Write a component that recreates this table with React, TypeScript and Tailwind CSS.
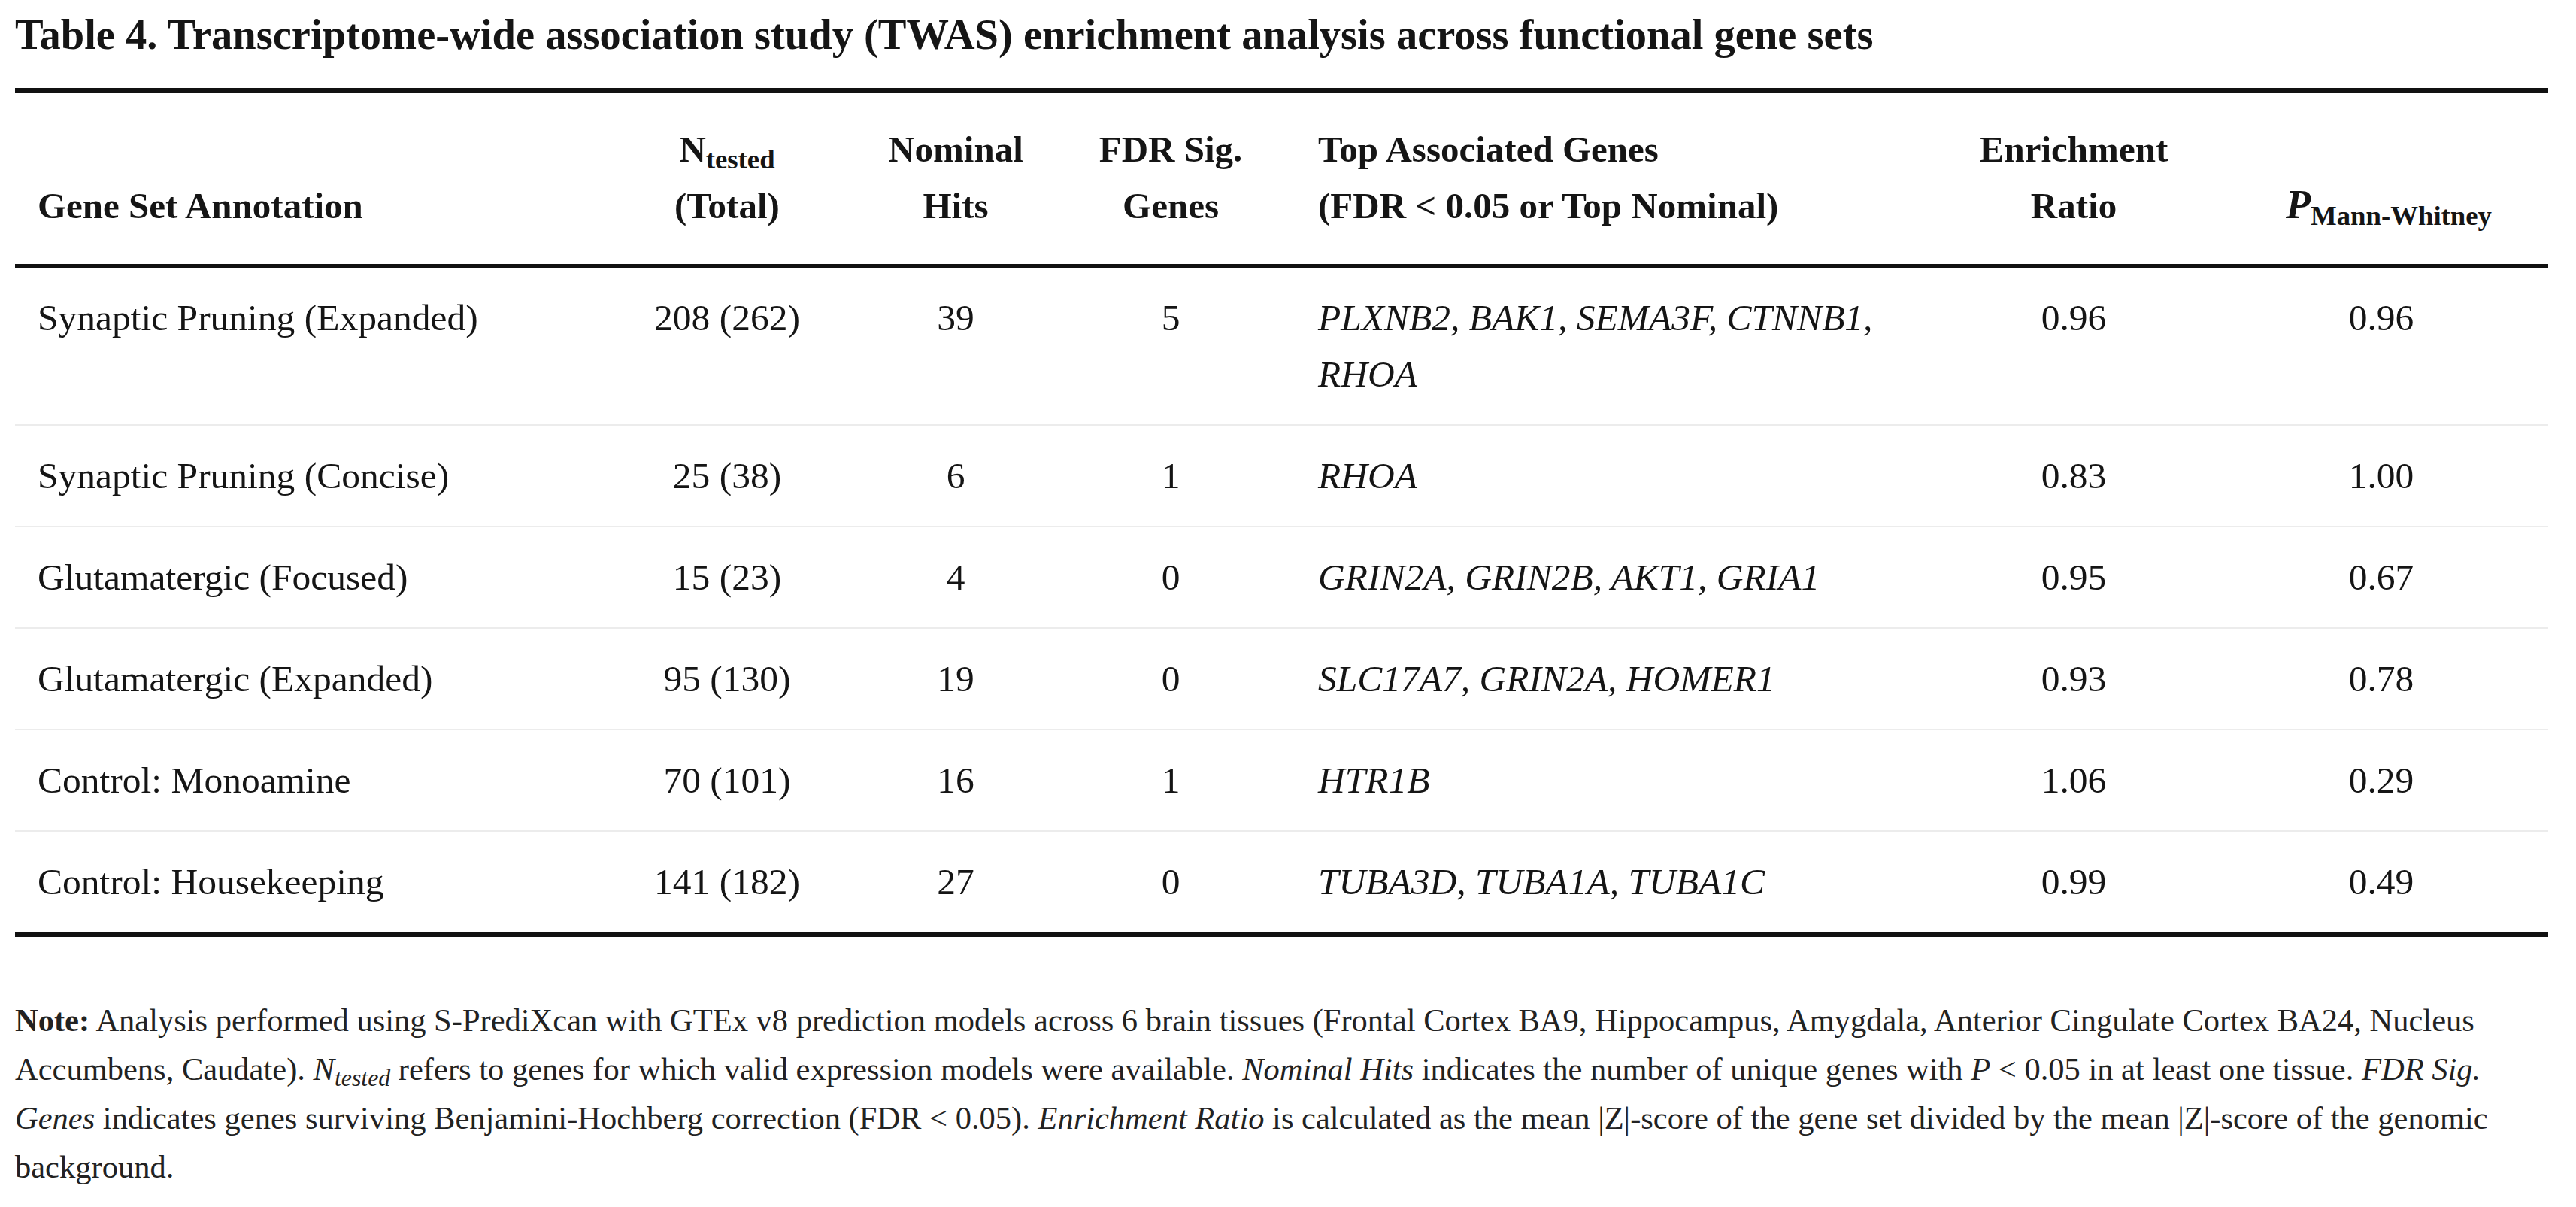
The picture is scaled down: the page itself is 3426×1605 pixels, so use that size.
import React from "react";

type Row = {
  name: string;
  tested: string;
  hits: string;
  fdr: string;
  genes: string;
  ratio: string;
  p: string;
};

const rows: Row[] = [
  { name: "Synaptic Pruning (Expanded)", tested: "208 (262)", hits: "39", fdr: "5", genes: "PLXNB2, BAK1, SEMA3F, CTNNB1, RHOA", ratio: "0.96", p: "0.96" },
  { name: "Synaptic Pruning (Concise)", tested: "25 (38)", hits: "6", fdr: "1", genes: "RHOA", ratio: "0.83", p: "1.00" },
  { name: "Glutamatergic (Focused)", tested: "15 (23)", hits: "4", fdr: "0", genes: "GRIN2A, GRIN2B, AKT1, GRIA1", ratio: "0.95", p: "0.67" },
  { name: "Glutamatergic (Expanded)", tested: "95 (130)", hits: "19", fdr: "0", genes: "SLC17A7, GRIN2A, HOMER1", ratio: "0.93", p: "0.78" },
  { name: "Control: Monoamine", tested: "70 (101)", hits: "16", fdr: "1", genes: "HTR1B", ratio: "1.06", p: "0.29" },
  { name: "Control: Housekeeping", tested: "141 (182)", hits: "27", fdr: "0", genes: "TUBA3D, TUBA1A, TUBA1C", ratio: "0.99", p: "0.49" },
];

function Th({ children, left }: { children: React.ReactNode; left?: boolean }) {
  return (
    <th className={`px-[30px] pt-[37px] pb-[40px] align-bottom text-[49px] font-bold ${left ? "text-left" : "text-center"}`}>
      {children}
    </th>
  );
}

export default function App() {
  return (
    <div className="min-h-screen bg-white px-[20px] pt-[14px] text-[#151515]" style={{ fontFamily: '"Liberation Serif", "Times New Roman", serif' }}>
      <h1 className="text-[56.5px] font-bold leading-[64px]">
        Table 4. Transcriptome-wide association study (TWAS) enrichment analysis across functional gene sets
      </h1>

      <table className="mt-[39px] w-[3369px] table-fixed border-collapse border-t-[7px] border-b-[7px] border-[#111] text-[49.5px] leading-[75px]">
        <colgroup>
          <col className="w-[763px]" />
          <col className="w-[368px]" />
          <col className="w-[240px]" />
          <col className="w-[332px]" />
          <col className="w-[848px]" />
          <col className="w-[374px]" />
          <col className="w-[444px]" />
        </colgroup>
        <thead>
          <tr className="border-b-[5px] border-[#111]">
            <Th left>Gene Set Annotation</Th>
            <Th>
              N<sub>tested</sub>
              <br />
              (Total)
            </Th>
            <Th>
              Nominal
              <br />
              Hits
            </Th>
            <Th>
              FDR Sig.
              <br />
              Genes
            </Th>
            <Th left>
              Top Associated Genes
              <br />
              (FDR &lt; 0.05 or Top Nominal)
            </Th>
            <Th>
              Enrichment
              <br />
              Ratio
            </Th>
            <Th>
              <span className="ml-[20px]">
                <i className="text-[54px]">P</i>
                <sub>Mann-Whitney</sub>
              </span>
            </Th>
          </tr>
        </thead>
        <tbody>
          {rows.map((row, index) => (
            <tr key={row.name} className={index < rows.length - 1 ? "border-b-2 border-[#ececec]" : ""}>
              <td className="px-[30px] py-[29px] align-top">{row.name}</td>
              <td className="px-[30px] py-[29px] text-center align-top">{row.tested}</td>
              <td className="px-[30px] py-[29px] text-center align-top">{row.hits}</td>
              <td className="px-[30px] py-[29px] text-center align-top">{row.fdr}</td>
              <td className="px-[30px] py-[29px] align-top">
                <div className="max-w-[785px] italic">{row.genes}</div>
              </td>
              <td className="px-[30px] py-[29px] text-center align-top">{row.ratio}</td>
              <td className="px-[30px] py-[29px] text-center align-top">{row.p}</td>
            </tr>
          ))}
        </tbody>
      </table>

      <p className="mt-[78px] w-[3380px] text-[42.5px] leading-[65px] text-[#222]">
        <b>Note:</b> Analysis performed using S-PrediXcan with GTEx v8 prediction models across 6 brain tissues (Frontal Cortex BA9, Hippocampus, Amygdala, Anterior Cingulate Cortex BA24, Nucleus
        <br />
        Accumbens, Caudate).{" "}
        <i>
          N<sub>tested</sub>
        </i>{" "}
        refers to genes for which valid expression models were available. <i>Nominal Hits</i> indicates the number of unique genes with <i>P</i> &lt; 0.05 in at least one tissue. <i>FDR Sig.</i>
        <br />
        <i>Genes</i> indicates genes surviving Benjamini-Hochberg correction (FDR &lt; 0.05). <i>Enrichment Ratio</i> is calculated as the mean |Z|-score of the gene set divided by the mean |Z|-score of the genomic
        <br />
        background.
      </p>
    </div>
  );
}
